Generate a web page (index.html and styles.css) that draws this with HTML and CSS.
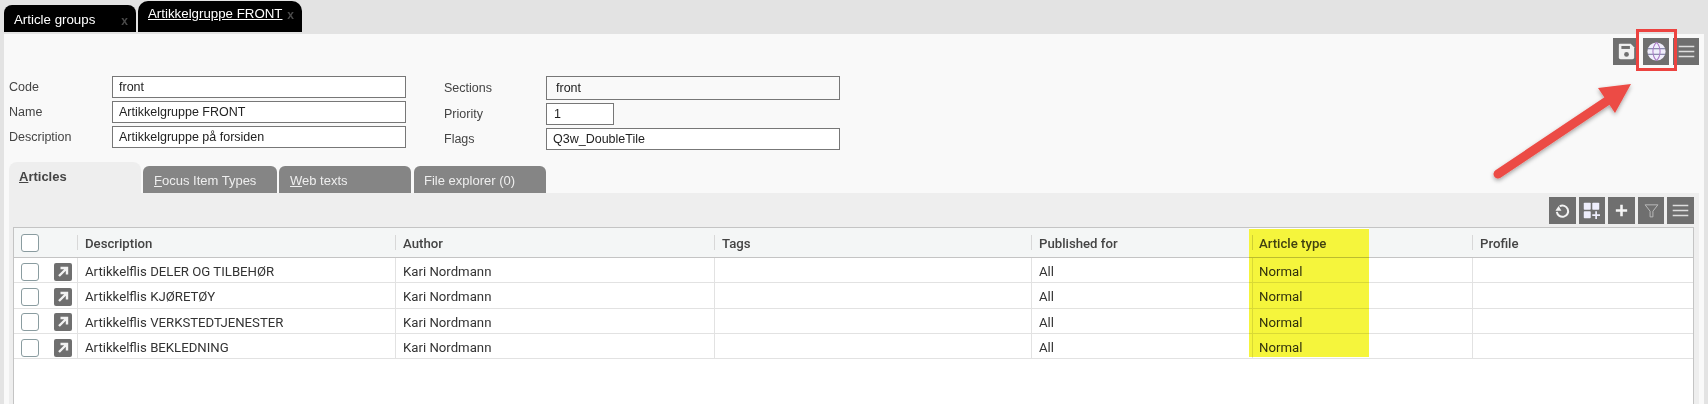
FILE: index.html
```html
<!DOCTYPE html>
<html lang="en">
<head>
<meta charset="utf-8">
<title>Artikkelgruppe FRONT</title>
<link rel="stylesheet" href="styles.css">
</head>
<body>
<div class="app">
  <nav class="doc-tabs">
    <div class="doc-tab"><span class="doc-title">Article groups</span><span class="doc-x">x</span></div>
    <div class="doc-tab active"><span class="doc-title">Artikkelgruppe FRONT</span><span class="doc-x">x</span></div>
  </nav>
  <main class="sheet">
    <div class="top-tools">
      <button class="tool"><svg viewBox="2 2 20 20"><path fill="#f0f0f0" d="M4 3h13l4 4v12a2 2 0 0 1-2 2H5a2 2 0 0 1-2-2V4a1 1 0 0 1 1-1z"/><rect x="6" y="5.500" width="10" height="3.500" fill="#6f6f6f"/><circle cx="12" cy="15.500" r="2.800" fill="#6f6f6f"/></svg></button>
      <button class="tool"><svg class="globe" viewBox="0 0 24 24"><circle cx="12" cy="12" r="11.500" fill="#f0eefc"/><path fill="none" stroke="#5c5c88" stroke-width="1.100" d="M1 8.500h22M1 15.500h22"/><path fill="none" stroke="#a878c4" stroke-width="1.300" d="M12 .5c-6 6-6 17 0 23c6-6 6-17 0-23z"/></svg></button>
      <button class="tool"><svg viewBox="0 0 24 24"><path stroke="#dedede" stroke-width="2.200" d="M1 5h22M1 12h22M1 19h22"/></svg></button>
    </div>
    <section class="form">
      <div class="form-col left">
        <div class="field"><label>Code</label><div class="input wide">front</div></div>
        <div class="field"><label>Name</label><div class="input wide">Artikkelgruppe FRONT</div></div>
        <div class="field"><label>Description</label><div class="input wide">Artikkelgruppe på forsiden</div></div>
      </div>
      <div class="form-col right">
        <div class="field sections"><label>Sections</label><div class="input wide readonly">front</div></div>
        <div class="field"><label>Priority</label><div class="input small">1</div></div>
        <div class="field"><label>Flags</label><div class="input wide">Q3w_DoubleTile</div></div>
      </div>
    </section>
    <div class="sub-tabs">
      <div class="sub-tab active"><u>A</u>rticles</div>
      <div class="sub-tab focus"><u>F</u>ocus Item Types</div>
      <div class="sub-tab web"><u>W</u>eb texts</div>
      <div class="sub-tab file">File explorer (0)</div>
    </div>
    <section class="panel">
      <div class="panel-tools">
        <button class="tool"><svg viewBox="0 0 24 24"><path fill="none" stroke="#f2f2f2" stroke-width="2.800" d="M8 6a8 8 0 1 1-4 8"/><path fill="#f2f2f2" d="M2 12.500h8.500l-4-7z"/></svg></button>
        <button class="tool"><svg viewBox="1 1 22 22"><rect x="2" y="2" width="9" height="9" rx="1" fill="#eeeefc"/><rect x="13" y="2" width="9" height="9" rx="1" fill="#eeeefc"/><rect x="2" y="13" width="9" height="9" rx="1" fill="#eeeefc"/><path stroke="#eeeefc" stroke-width="2.200" d="M18 13v10M13 18h10"/></svg></button>
        <button class="tool"><svg viewBox="0 0 24 24"><path stroke="#f5f5f5" stroke-width="3.600" d="M12 4v16M4 12h16"/></svg></button>
        <button class="tool"><svg viewBox="0 0 24 24"><path fill="none" stroke="#b9b9b9" stroke-width="1.400" d="M3 4h18l-7 9v8h-4v-8z"/></svg></button>
        <button class="tool"><svg viewBox="0 0 24 24"><path stroke="#dedede" stroke-width="2.200" d="M1 5h22M1 12h22M1 19h22"/></svg></button>
      </div>
      <div class="grid-wrap">
        <div class="grid">
          <div class="row head">
            <div class="cell c-check"><span class="check"></span></div>
            <div class="cell c-open"></div>
            <div class="cell c-desc"><span>Description</span></div>
            <div class="cell c-author"><span>Author</span></div>
            <div class="cell c-tags"><span>Tags</span></div>
            <div class="cell c-pub"><span>Published for</span></div>
            <div class="cell c-type"><span>Article type</span></div>
            <div class="cell c-prof"><span>Profile</span></div>
          </div>
          <div class="row">
            <div class="cell c-check"><span class="check"></span></div>
            <div class="cell c-open"><span class="open"><svg viewBox="0 0 18 18"><path fill="none" stroke="#f2f2f2" stroke-width="2.400" d="M5 13l7.500-7.500M6.500 5h6.500v6.500"/></svg></span></div>
            <div class="cell c-desc">Artikkelflis DELER OG TILBEHØR</div>
            <div class="cell c-author">Kari Nordmann</div>
            <div class="cell c-tags"></div>
            <div class="cell c-pub">All</div>
            <div class="cell c-type">Normal</div>
            <div class="cell c-prof"></div>
          </div>
          <div class="row">
            <div class="cell c-check"><span class="check"></span></div>
            <div class="cell c-open"><span class="open"><svg viewBox="0 0 18 18"><path fill="none" stroke="#f2f2f2" stroke-width="2.400" d="M5 13l7.500-7.500M6.500 5h6.500v6.500"/></svg></span></div>
            <div class="cell c-desc">Artikkelflis KJØRETØY</div>
            <div class="cell c-author">Kari Nordmann</div>
            <div class="cell c-tags"></div>
            <div class="cell c-pub">All</div>
            <div class="cell c-type">Normal</div>
            <div class="cell c-prof"></div>
          </div>
          <div class="row">
            <div class="cell c-check"><span class="check"></span></div>
            <div class="cell c-open"><span class="open"><svg viewBox="0 0 18 18"><path fill="none" stroke="#f2f2f2" stroke-width="2.400" d="M5 13l7.500-7.500M6.500 5h6.500v6.500"/></svg></span></div>
            <div class="cell c-desc">Artikkelflis VERKSTEDTJENESTER</div>
            <div class="cell c-author">Kari Nordmann</div>
            <div class="cell c-tags"></div>
            <div class="cell c-pub">All</div>
            <div class="cell c-type">Normal</div>
            <div class="cell c-prof"></div>
          </div>
          <div class="row">
            <div class="cell c-check"><span class="check"></span></div>
            <div class="cell c-open"><span class="open"><svg viewBox="0 0 18 18"><path fill="none" stroke="#f2f2f2" stroke-width="2.400" d="M5 13l7.500-7.500M6.500 5h6.500v6.500"/></svg></span></div>
            <div class="cell c-desc">Artikkelflis BEKLEDNING</div>
            <div class="cell c-author">Kari Nordmann</div>
            <div class="cell c-tags"></div>
            <div class="cell c-pub">All</div>
            <div class="cell c-type">Normal</div>
            <div class="cell c-prof"></div>
          </div>
        </div>
      </div>
    </section>
  </main>
  <div class="mark-yellow"></div>
  <div class="mark-box"></div>
  <svg class="mark-arrow" viewBox="0 0 1708 404">
    <defs><filter id="sh" x="-20%" y="-20%" width="140%" height="140%"><feDropShadow dx="0" dy="2" stdDeviation="2" flood-color="#000" flood-opacity=".35"/></filter></defs>
    <g filter="url(#sh)" fill="#ec4b45"><path d="M1498 174L1610 99" stroke="#ec4b45" stroke-width="9" stroke-linecap="round"/><path d="M1598 88L1631 84L1615 113z"/></g>
  </svg>
</div>
</body>
</html>
```
FILE: styles.css
```css
* { box-sizing: border-box; }
html, body { margin: 0; height: 100%; overflow: hidden; }
body { font-family: "Liberation Sans", Arial, sans-serif; font-size: 12.5px; color: #333; background: #e3e3e3; }
.app { position: relative; width: 1708px; height: 404px; overflow: hidden; }

.doc-tabs { display: flex; align-items: flex-end; gap: 2px; height: 32px; padding-left: 4px; }
.doc-tab { display: flex; background: #000; color: #fff; border-radius: 8px 8px 0 0; height: 27px; width: 132px; padding: 7px 8px 0 10px; font-size: 13.3px; justify-content: space-between; }
.doc-tab.active { height: 31px; width: 164px; padding: 5px 8px 0 10px; border-radius: 10px 10px 0 0; }
.doc-tab.active .doc-title { text-decoration: underline; }
.doc-x { color: #4a4a4a; font-weight: bold; font-size: 12px; padding-top: 2px; }

.sheet { margin: 2px 4px 0; height: 370px; background: #f9f9f9; }
.top-tools { display: flex; justify-content: flex-end; gap: 4px; padding: 4px 5px 0 0; height: 42px; }
.tool { display: flex; align-items: center; justify-content: center; width: 26px; height: 27px; padding: 0; border: 0; background: #6f6f6f; }
.tool svg { width: 17px; height: 17px; display: block; }
.tool svg.globe { width: 19px; height: 19px; }

.form { display: flex; height: 86px; }
.form-col { display: flex; flex-direction: column; gap: 3px; }
.form-col.left { width: 440px; padding-left: 5px; }
.field { display: flex; align-items: center; height: 22px; }
.field.sections { height: 24px; }
.field label { width: 102px; color: #444; }
.left .field label { width: 103px; }
.input { height: 100%; border: 1px solid #777; background: #fff; padding-left: 6px; line-height: 20px; color: #222; }
.input.wide { width: 294px; }
.input.small { width: 68px; padding-left: 7px; }
.input.readonly { background: #f9f9f9; padding-left: 9px; line-height: 22px; }

.sub-tabs { display: flex; align-items: flex-end; height: 31px; padding-left: 5px; gap: 2px; margin-top: 0; font-size: 13px; }
.sub-tab { height: 27px; background: #858585; color: #eee; border-radius: 6px 6px 0 0; padding: 7px 0 0 11px; }
.sub-tab.active { height: 31px; width: 132px; background: #eee; color: #444; font-weight: bold; padding: 7px 0 0 10px; border-radius: 8px 8px 0 0; }
.sub-tab.focus { width: 134px; }
.sub-tab.web { width: 132px; }
.sub-tab.file { width: 132px; margin-left: 1px; padding-left: 10px; }

.panel { margin-left: 5px; margin-right: 5px; height: 211px; background: #eee; padding: 4px 0 0 4px; }
.panel-tools { display: flex; justify-content: flex-end; gap: 3px; padding-right: 5px; height: 30px; }
.panel-tools .tool { width: 26.6px; }
.grid-wrap { width: 1681px; height: 177px; background: #fff; border: 1px solid #c4c4c4; border-bottom: 0; font-family: Roboto, "Liberation Sans", sans-serif; font-size: 13.2px; }
.row { display: grid; grid-template-columns: 31px 32px 318px 319px 317px 221px 220px 1fr; height: 25.3px; border-bottom: 1px solid #e2e2e2; align-items: stretch; }
.row.head { height: 30px; background: linear-gradient(90deg, #f4f6f6 1235px, #fff 1235px, #fff 1355px, #f4f6f6 1355px); border-bottom: 1px solid #c4c4c4; font-weight: 500; color: #444; }
.cell { display: flex; align-items: center; padding: 3px 0 0 7px; border-left: 1px solid #e2e2e2; color: #333; white-space: nowrap; }
.cell.c-check { border-left: 0; padding-left: 7px; }
.cell.c-open { border-left: 0; padding-left: 9px; }
.cell.c-type { padding-left: 6px; }
.head .cell { border-left: 0; color: #444; padding-top: 2px; padding-left: 8px; }
.head .cell.c-check { padding-top: 0; padding-left: 7px; }
.head .cell.c-type { padding-left: 7px; }
.head .c-desc, .head .c-author, .head .c-tags, .head .c-pub, .head .c-type, .head .c-prof { position: relative; }
.head .c-desc::before, .head .c-author::before, .head .c-tags::before, .head .c-pub::before, .head .c-type::before, .head .c-prof::before { content: ""; position: absolute; left: 0; top: 7px; bottom: 7px; width: 1px; background: #d8d8d8; }
.check { display: block; width: 18px; height: 18px; border: 1px solid #8a9ca0; border-radius: 3px; background: #fff; }
.open { display: block; width: 18px; height: 18px; background: #6f6f6f; border-radius: 2px; }
.open svg { display: block; width: 18px; height: 18px; }

.mark-yellow { position: absolute; left: 1249px; top: 229px; width: 120px; height: 128px; background: #f5f53c; mix-blend-mode: multiply; }
.mark-box { position: absolute; left: 1636px; top: 29px; width: 41px; height: 42px; border: 3px solid #ec4340; }
.mark-arrow { position: absolute; left: 0; top: 0; width: 1708px; height: 404px; pointer-events: none; }
```
